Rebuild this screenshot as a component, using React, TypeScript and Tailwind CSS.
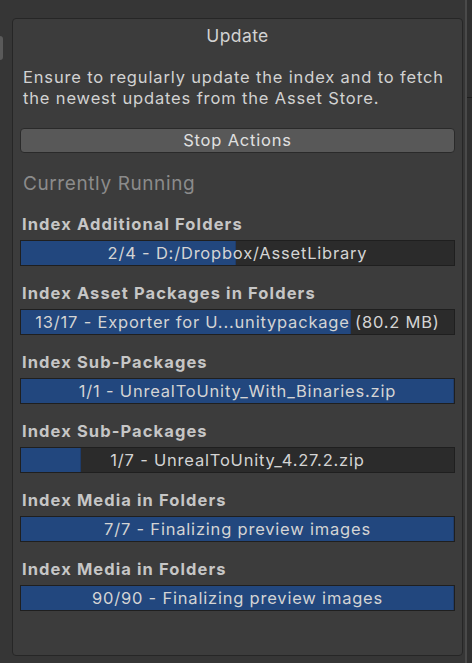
import React from 'react';

const TASKS = [
  { title: 'Index Additional Folders', text: '2/4 - D:/Dropbox/AssetLibrary', progress: 216 / 436 },
  { title: 'Index Asset Packages in Folders', text: '13/17 - Exporter for U...unitypackage (80.2 MB)', progress: 332 / 436 },
  { title: 'Index Sub-Packages', text: '1/1 - UnrealToUnity_With_Binaries.zip', progress: 1 },
  { title: 'Index Sub-Packages', text: '1/7 - UnrealToUnity_4.27.2.zip', progress: 60 / 436 },
  { title: 'Index Media in Folders', text: '7/7 - Finalizing preview images', progress: 1 },
  { title: 'Index Media in Folders', text: '90/90 - Finalizing preview images', progress: 1 },
];

function ProgressBar({ text, progress }: { text: string; progress: number }) {
  return (
    <div className="relative h-[26px] border border-[#1f1f1f] bg-[#2b2b2b] flex items-center justify-center">
      <div
        className="absolute left-0 top-0 bottom-0 bg-[#22477e] border-r border-[#1f3c6a]"
        style={{ width: `${progress * 100}%` }}
      />
      <span className="relative text-[16.5px] leading-none tracking-[0.8px] text-[#d4d4d4] whitespace-nowrap">
        {text}
      </span>
    </div>
  );
}

export default function App() {
  return (
    <div
      className="h-[663px] w-[472px] bg-[#363636] flex overflow-hidden"
      style={{ fontFamily: 'Inter, "Noto Sans", sans-serif' }}
    >
      {/* left sliver of neighbouring window */}
      <div className="w-[12px] flex flex-col pt-[36px]">
        <div className="w-[3px] h-[24px] bg-[#5a5a5a] rounded-r-sm" />
      </div>

      <div className="flex flex-col pt-[18px]">
        <div className="w-[451px] h-[638px] bg-[#3c3c3c] border border-[#262626] rounded-[4px] px-[7px] flex flex-col">
          <div className="h-[34px] flex items-center justify-center text-[17.5px] leading-none tracking-[0.4px] text-[#d2d2d2]">
            Update
          </div>

          <p className="mt-[14px] px-[3px] text-[16.5px] leading-[21px] text-[#d2d2d2] tracking-[0.85px] whitespace-nowrap">
            Ensure to regularly update the index and to fetch
            <br />
            the newest updates from the Asset Store.
          </p>

          <button className="mt-[19px] h-[25px] bg-[#585858] border border-[#2a2a2a] rounded-[4px] text-[16.5px] tracking-[0.8px] text-[#e0e0e0] flex items-center justify-center">
            Stop Actions
          </button>

          <div className="mt-[20px] px-[3px] text-[19px] leading-[22px] tracking-[0.6px] text-[#8b8b8b]">
            Currently Running
          </div>

          <div className="mt-[19px] flex flex-col">
            {TASKS.map((t, i) => (
              <div key={i} className={i === 0 ? '' : 'mt-[17px]'}>
                <div className="h-[20px] px-[2px] text-[16.5px] leading-[20px] font-bold text-[#c6c6c6] tracking-[1.1px] whitespace-nowrap">
                  {t.title}
                </div>
                <div className="mt-[6px]">
                  <ProgressBar text={t.text} progress={t.progress} />
                </div>
              </div>
            ))}
          </div>
        </div>
      </div>

      {/* right edge: splitter */}
      <div className="ml-[2px] w-[2px] bg-[#4a4a4a]" />
      <div className="flex-1 flex flex-col bg-[#303030]">
        <div className="h-[97px]" />
        <div className="h-[1px] bg-[#1e1e1e]" />
      </div>
    </div>
  );
}
